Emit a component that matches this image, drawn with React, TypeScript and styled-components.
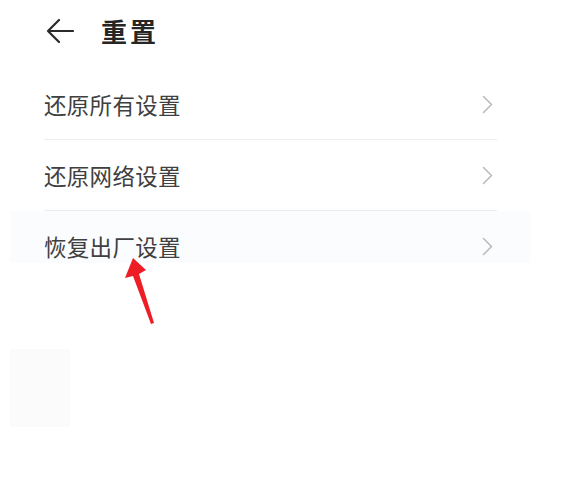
import React from "react";
import styled, { createGlobalStyle } from "styled-components";

const Global = createGlobalStyle`
  html, body { margin: 0; padding: 0; background: #ffffff; }
  body { font-family: "Noto Sans CJK SC", "Noto Sans", sans-serif; }
`;

const Page = styled.div`
  position: relative;
  width: 569px;
  height: 483px;
  overflow: hidden;
  background: #ffffff;
`;

const Header = styled.div`
  display: flex;
  align-items: center;
  gap: 27px;
  padding: 14px 0 0 46px;
  height: 34px;
`;

const BackIcon = styled.svg`
  width: 28px;
  height: 28px;
  flex: none;
`;

const Title = styled.h1`
  margin: 0;
  font-size: 26px;
  font-weight: 600;
  color: #262626;
  line-height: 34px;
  letter-spacing: 3px;
`;

const List = styled.div`
  display: flex;
  flex-direction: column;
  margin: 21px 72px 0 44px;
`;

const Row = styled.div<{ $tinted?: boolean; $last?: boolean }>`
  display: flex;
  align-items: center;
  justify-content: space-between;
  height: 70px;
  border-bottom: ${(p) => (p.$last ? "none" : "1px solid #ededed")};
  ${(p) =>
    p.$tinted
      ? `background: linear-gradient(#fbfcfe 0, #fbfcfe 52px, #ffffff 52px); margin: 0 -33px 0 -34px; padding: 0 37px 0 34px;`
      : `padding-right: 4px;`}
`;

const Label = styled.span`
  font-size: 22.5px;
  color: #404040;
  letter-spacing: 0.3px;
`;

const Chevron = styled.svg`
  width: 11px;
  height: 19px;
`;

const FaintBox = styled.div`
  margin: 68px 0 0 10px;
  width: 60px;
  height: 78px;
  background: #fbfbfb;
`;

const RedArrow = styled.svg`
  position: absolute;
  left: 120px;
  top: 252px;
  width: 40px;
  height: 76px;
`;

const ChevronIcon = () => (
  <Chevron viewBox="0 0 11 19">
    <path d="M1.5 1.5 L9.5 9.5 L1.5 17.5" fill="none" stroke="#b8b8b8" strokeWidth="1.5" strokeLinecap="round" strokeLinejoin="round" />
  </Chevron>
);

const items = ["还原所有设置", "还原网络设置", "恢复出厂设置"];

export default function App() {
  return (
    <>
      <Global />
      <Page>
        <Header>
          <BackIcon viewBox="0 0 28 28">
            <path d="M2 14 H27 M13 3 L2 14 L13 25" fill="none" stroke="#2a2a2a" strokeWidth="2.2" strokeLinecap="round" strokeLinejoin="round" />
          </BackIcon>
          <Title>重置</Title>
        </Header>
        <List>
          {items.map((t, i) => (
            <Row key={t} $tinted={i === 2} $last={i === 2}>
              <Label>{t}</Label>
              <ChevronIcon />
            </Row>
          ))}
        </List>
        <FaintBox />
        <RedArrow viewBox="0 0 40 76">
          <path d="M13 6 L5 26 L13 24 L31 72 L34 71 L19 22 L26 18 Z" fill="#ee1c25" />
        </RedArrow>
      </Page>
    </>
  );
}
